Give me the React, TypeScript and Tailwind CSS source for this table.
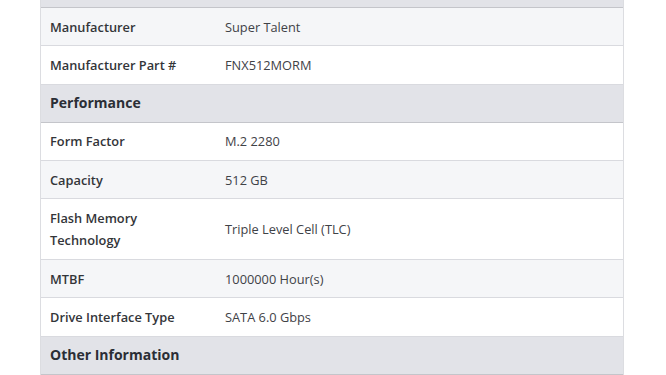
import React from "react";

type Row =
  | { kind: "header"; label: string }
  | { kind: "row"; label: string; value: string; alt: boolean };

const rows: Row[] = [
  { kind: "row", label: "Manufacturer", value: "Super Talent", alt: true },
  { kind: "row", label: "Manufacturer Part #", value: "FNX512MORM", alt: false },
  { kind: "header", label: "Performance" },
  { kind: "row", label: "Form Factor", value: "M.2 2280", alt: false },
  { kind: "row", label: "Capacity", value: "512 GB", alt: true },
  { kind: "row", label: "Flash Memory Technology", value: "Triple Level Cell (TLC)", alt: false },
  { kind: "row", label: "MTBF", value: "1000000 Hour(s)", alt: true },
  { kind: "row", label: "Drive Interface Type", value: "SATA 6.0 Gbps", alt: false },
  { kind: "header", label: "Other Information" },
];

export default function App() {
  return (
    <div className="w-[666px] h-[375px] overflow-hidden bg-white" style={{ fontFamily: '"Open Sans", "Noto Sans", sans-serif' }}>
      <div className="ml-[40px] w-[584px] border-x border-[#dcdde1]">
        <div className="h-[8px] bg-[#e2e3e8] border-b border-[#c4c5ca]" />
        {rows.map((r, i) =>
          r.kind === "header" ? (
            <div
              key={i}
              className="bg-[#e2e3e8] border-b border-[#c4c5ca] pl-[9px] pr-[10px] py-[7.55px] leading-[22.2px] text-[14px] font-bold text-[#2b2e35]"
            >
              {r.label}
            </div>
          ) : (
            <div
              key={i}
              className={`flex items-center border-b border-[#d9dadf] ${r.alt ? "bg-[#f5f6f8]" : "bg-white"}`}
            >
              <div className="w-[174px] shrink-0 pl-[9px] pr-[10px] py-[7.55px] leading-[22.2px] text-[12.8px] font-semibold text-[#333539]">
                {r.label === "Flash Memory Technology" ? (
                  <>
                    Flash Memory
                    <br />
                    Technology
                  </>
                ) : (
                  r.label
                )}
              </div>
              <div className="px-[10px] py-[7.55px] leading-[22.2px] text-[12.8px] text-[#3f4247]">{r.value}</div>
            </div>
          )
        )}
      </div>
    </div>
  );
}
